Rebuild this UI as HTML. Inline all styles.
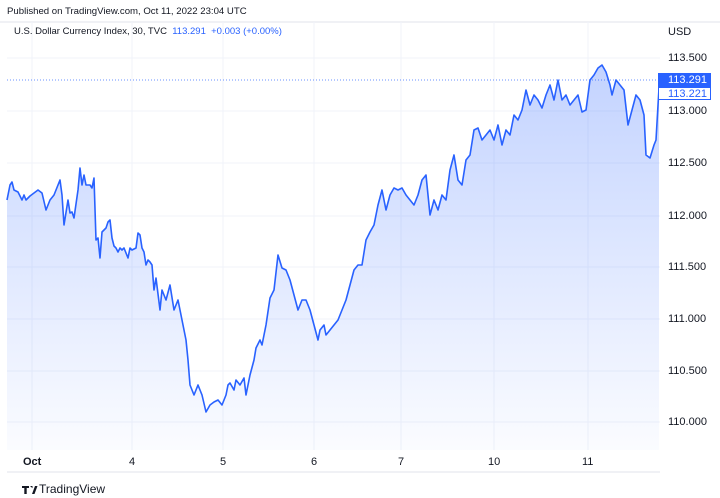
<!DOCTYPE html><html><head><style>
body{margin:0;width:720px;height:498px;background:#fff;font-family:"Liberation Sans",sans-serif;overflow:hidden;position:relative}
.t{position:absolute;font-size:11px;color:#131722;white-space:nowrap}
</style></head><body>
<div class="t" style="left:7px;top:6px;font-size:9.6px">Published on TradingView.com, Oct 11, 2022 23:04 UTC</div>
<svg width="720" height="498" style="position:absolute;left:0;top:0">
<defs><linearGradient id="g" x1="0" y1="0" x2="0" y2="1"><stop offset="0" stop-color="#2962ff" stop-opacity=".28"/><stop offset="1" stop-color="#2962ff" stop-opacity=".02"/></linearGradient></defs>
<line x1="0" y1="22" x2="720" y2="22" stroke="#e0e3eb"/>
<line x1="7" y1="472" x2="660" y2="472" stroke="#e0e3eb"/>
<g stroke="#f0f3fa">
<line x1="32" y1="22" x2="32" y2="450"/><line x1="132" y1="22" x2="132" y2="450"/><line x1="223" y1="22" x2="223" y2="450"/><line x1="314" y1="22" x2="314" y2="450"/><line x1="401" y1="22" x2="401" y2="450"/><line x1="494" y1="22" x2="494" y2="450"/><line x1="588" y1="22" x2="588" y2="450"/>
<line x1="7" y1="58" x2="660" y2="58"/><line x1="7" y1="111" x2="660" y2="111"/><line x1="7" y1="163" x2="660" y2="163"/><line x1="7" y1="216" x2="660" y2="216"/><line x1="7" y1="267" x2="660" y2="267"/><line x1="7" y1="319" x2="660" y2="319"/><line x1="7" y1="371" x2="660" y2="371"/><line x1="7" y1="422" x2="660" y2="422"/>
</g>
<line x1="7" y1="80" x2="660" y2="80" stroke="#2962ff" stroke-dasharray="1,2" opacity=".7"/>
<path d="M7,200 L10,185 12,182 14,190 18,192 22,200 24,195 26,200 30,196 34,193 38,190 42,193 46,210 50,200 54,195 58,185 60,180 62,195 64,225 68,200 70,213 72,212 74,218 78,190 80,168 82,185 84,175 86,185 90,185 92,188 94,178 96,240 98,238 100,258 102,232 104,230 106,228 108,222 110,220 112,238 114,246 116,248 118,252 120,248 122,250 124,248 128,258 130,248 132,250 136,248 138,233 140,235 142,248 144,252 146,265 148,260 150,262 152,265 154,290 156,278 160,310 162,290 166,300 170,285 174,310 178,300 182,320 186,340 188,360 190,385 194,395 198,385 202,395 206,412 210,405 214,402 218,400 222,405 226,395 228,385 230,383 234,390 236,380 240,385 244,378 246,395 250,375 254,360 256,348 260,340 262,345 266,325 270,298 274,290 278,255 282,268 286,270 290,280 294,295 298,310 302,300 306,300 310,310 314,325 318,340 320,330 324,325 326,335 330,330 334,325 338,320 342,310 346,300 350,285 354,270 358,265 362,265 366,240 370,232 374,225 378,205 382,190 386,210 390,195 394,188 398,190 402,188 406,195 410,200 414,205 418,195 422,180 426,175 430,215 434,200 438,210 442,195 446,200 450,170 454,155 458,180 462,185 466,160 470,155 474,130 478,128 482,140 486,135 490,130 494,140 498,125 502,145 506,130 510,135 514,115 518,120 522,110 526,90 530,105 534,95 538,100 542,108 546,95 550,85 554,100 558,80 562,100 566,95 570,105 574,100 578,95 582,112 586,110 590,80 594,75 598,68 602,65 606,72 610,85 612,95 616,80 620,85 624,90 628,125 632,110 636,95 640,100 644,115 646,155 650,158 654,145 656,140 659,88" fill="none" stroke="#2962ff" stroke-width="1.6" stroke-linejoin="round"/>
<path d="M7,200 L10,185 12,182 14,190 18,192 22,200 24,195 26,200 30,196 34,193 38,190 42,193 46,210 50,200 54,195 58,185 60,180 62,195 64,225 68,200 70,213 72,212 74,218 78,190 80,168 82,185 84,175 86,185 90,185 92,188 94,178 96,240 98,238 100,258 102,232 104,230 106,228 108,222 110,220 112,238 114,246 116,248 118,252 120,248 122,250 124,248 128,258 130,248 132,250 136,248 138,233 140,235 142,248 144,252 146,265 148,260 150,262 152,265 154,290 156,278 160,310 162,290 166,300 170,285 174,310 178,300 182,320 186,340 188,360 190,385 194,395 198,385 202,395 206,412 210,405 214,402 218,400 222,405 226,395 228,385 230,383 234,390 236,380 240,385 244,378 246,395 250,375 254,360 256,348 260,340 262,345 266,325 270,298 274,290 278,255 282,268 286,270 290,280 294,295 298,310 302,300 306,300 310,310 314,325 318,340 320,330 324,325 326,335 330,330 334,325 338,320 342,310 346,300 350,285 354,270 358,265 362,265 366,240 370,232 374,225 378,205 382,190 386,210 390,195 394,188 398,190 402,188 406,195 410,200 414,205 418,195 422,180 426,175 430,215 434,200 438,210 442,195 446,200 450,170 454,155 458,180 462,185 466,160 470,155 474,130 478,128 482,140 486,135 490,130 494,140 498,125 502,145 506,130 510,135 514,115 518,120 522,110 526,90 530,105 534,95 538,100 542,108 546,95 550,85 554,100 558,80 562,100 566,95 570,105 574,100 578,95 582,112 586,110 590,80 594,75 598,68 602,65 606,72 610,85 612,95 616,80 620,85 624,90 628,125 632,110 636,95 640,100 644,115 646,155 650,158 654,145 656,140 659,88 L659,450 L7,450 Z" fill="url(#g)"/>
<rect x="658" y="73" width="53" height="14" fill="#2962ff"/>
<rect x="658.5" y="87.5" width="52" height="12" fill="#fff" stroke="#2962ff"/>
<path d="M22,486h7v2h-2.3v6h-2.4v-6h-2.3z M30,486h2.5v2.2zM32,494l3-8h2.5l-3,8z" fill="#131722"/>
</svg>
<div class="t" style="left:14px;top:26px;font-size:9.5px">U.S. Dollar Currency Index, 30, TVC <span style="color:#2962ff">&nbsp;113.291 &nbsp;+0.003 (+0.00%)</span></div>
<div class="t" style="left:668px;top:26px">USD</div>
<div class="t" style="left:668px;top:52px">113.500</div>
<div class="t" style="left:668px;top:74px;color:#fff">113.291</div>
<div class="t" style="left:668px;top:88px;color:#2962ff">113.221</div>
<div class="t" style="left:668px;top:105px">113.000</div>
<div class="t" style="left:668px;top:157px">112.500</div>
<div class="t" style="left:668px;top:210px">112.000</div>
<div class="t" style="left:668px;top:261px">111.500</div>
<div class="t" style="left:668px;top:313px">111.000</div>
<div class="t" style="left:668px;top:365px">110.500</div>
<div class="t" style="left:668px;top:416px">110.000</div>
<div class="t" style="left:23px;top:456px;font-weight:bold">Oct</div>
<div class="t" style="left:129px;top:456px">4</div>
<div class="t" style="left:220px;top:456px">5</div>
<div class="t" style="left:311px;top:456px">6</div>
<div class="t" style="left:398px;top:456px">7</div>
<div class="t" style="left:488px;top:456px">10</div>
<div class="t" style="left:582px;top:456px">11</div>
<div class="t" style="left:39px;top:482px;font-size:12px">TradingView</div>
</body></html>
